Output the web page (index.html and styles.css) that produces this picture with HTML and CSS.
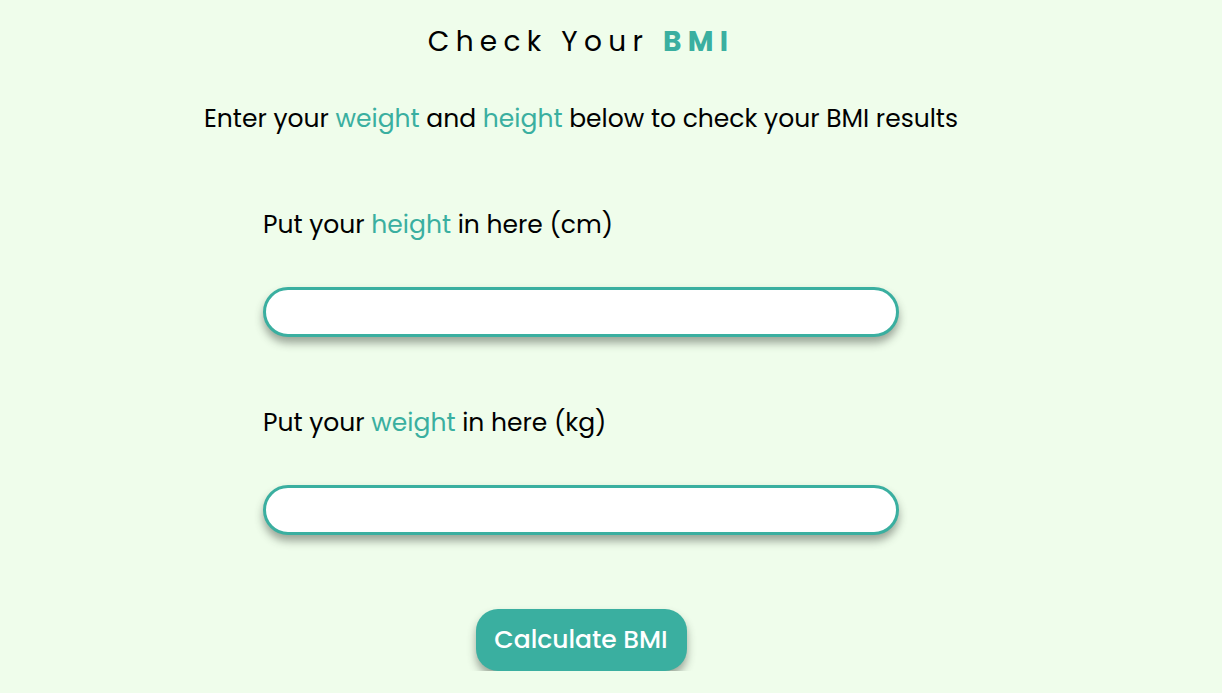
FILE: index.html
```html
<!DOCTYPE html>
<html lang="en">
<head>
<meta charset="utf-8">
<title>Check Your BMI</title>
<link rel="stylesheet" href="styles.css">
</head>
<body>
<main class="page">
  <h1 class="title">Check Your <span class="accent bold">BMI</span></h1>
  <p class="intro">Enter your <span class="accent">weight</span> and <span class="accent">height</span> below to check your BMI results</p>
  <form class="form">
    <div class="field">
      <label class="label" for="height">Put your <span class="accent">height</span> in here (cm)</label>
      <input class="input" id="height" type="text">
    </div>
    <div class="field">
      <label class="label" for="weight">Put your <span class="accent">weight</span> in here (kg)</label>
      <input class="input" id="weight" type="text">
    </div>
    <div class="actions">
      <button class="btn" type="button">Calculate BMI</button>
    </div>
  </form>
</main>
</body>
</html>
```
FILE: styles.css
```css
* { box-sizing: border-box; }
body {
  margin: 0;
  background: #effdeb;
  font-family: "Poppins", "DejaVu Sans", "Open Sans", sans-serif;
  color: #000;
}
.page {
  width: 1162px;
  display: flex;
  flex-direction: column;
  align-items: center;
}
.accent { color: #3aafa0; }
.bold { font-weight: 700; }
.title {
  margin: 20px 0 0;
  font-size: 28px;
  line-height: 44px;
  font-weight: 400;
  letter-spacing: 6.3px;
}
.intro {
  margin: 36px 0 0;
  font-size: 25px;
  line-height: 38px;
}
.form {
  width: 636px;
  margin-top: 68px;
  display: flex;
  flex-direction: column;
}
.field {
  display: flex;
  flex-direction: column;
}
.field + .field { margin-top: 67px; }
.label {
  font-size: 25px;
  line-height: 38px;
}
.input {
  margin-top: 43px;
  height: 50px;
  width: 636px;
  border: 3px solid #3aafa0;
  border-radius: 25px;
  background: #fff;
  box-shadow: 0 6px 9px rgba(50, 60, 50, 0.45);
  outline: none;
  font: inherit;
  padding: 0 20px;
}
.actions {
  display: flex;
  justify-content: center;
  margin-top: 74px;
}
.btn {
  width: 211px;
  height: 62px;
  border: none;
  border-radius: 22px;
  background: #3aafa0;
  color: #fff;
  font-family: inherit;
  font-size: 25px;
  font-weight: 500;
  box-shadow: 0 6px 9px rgba(50, 60, 50, 0.45);
  cursor: pointer;
}
```
